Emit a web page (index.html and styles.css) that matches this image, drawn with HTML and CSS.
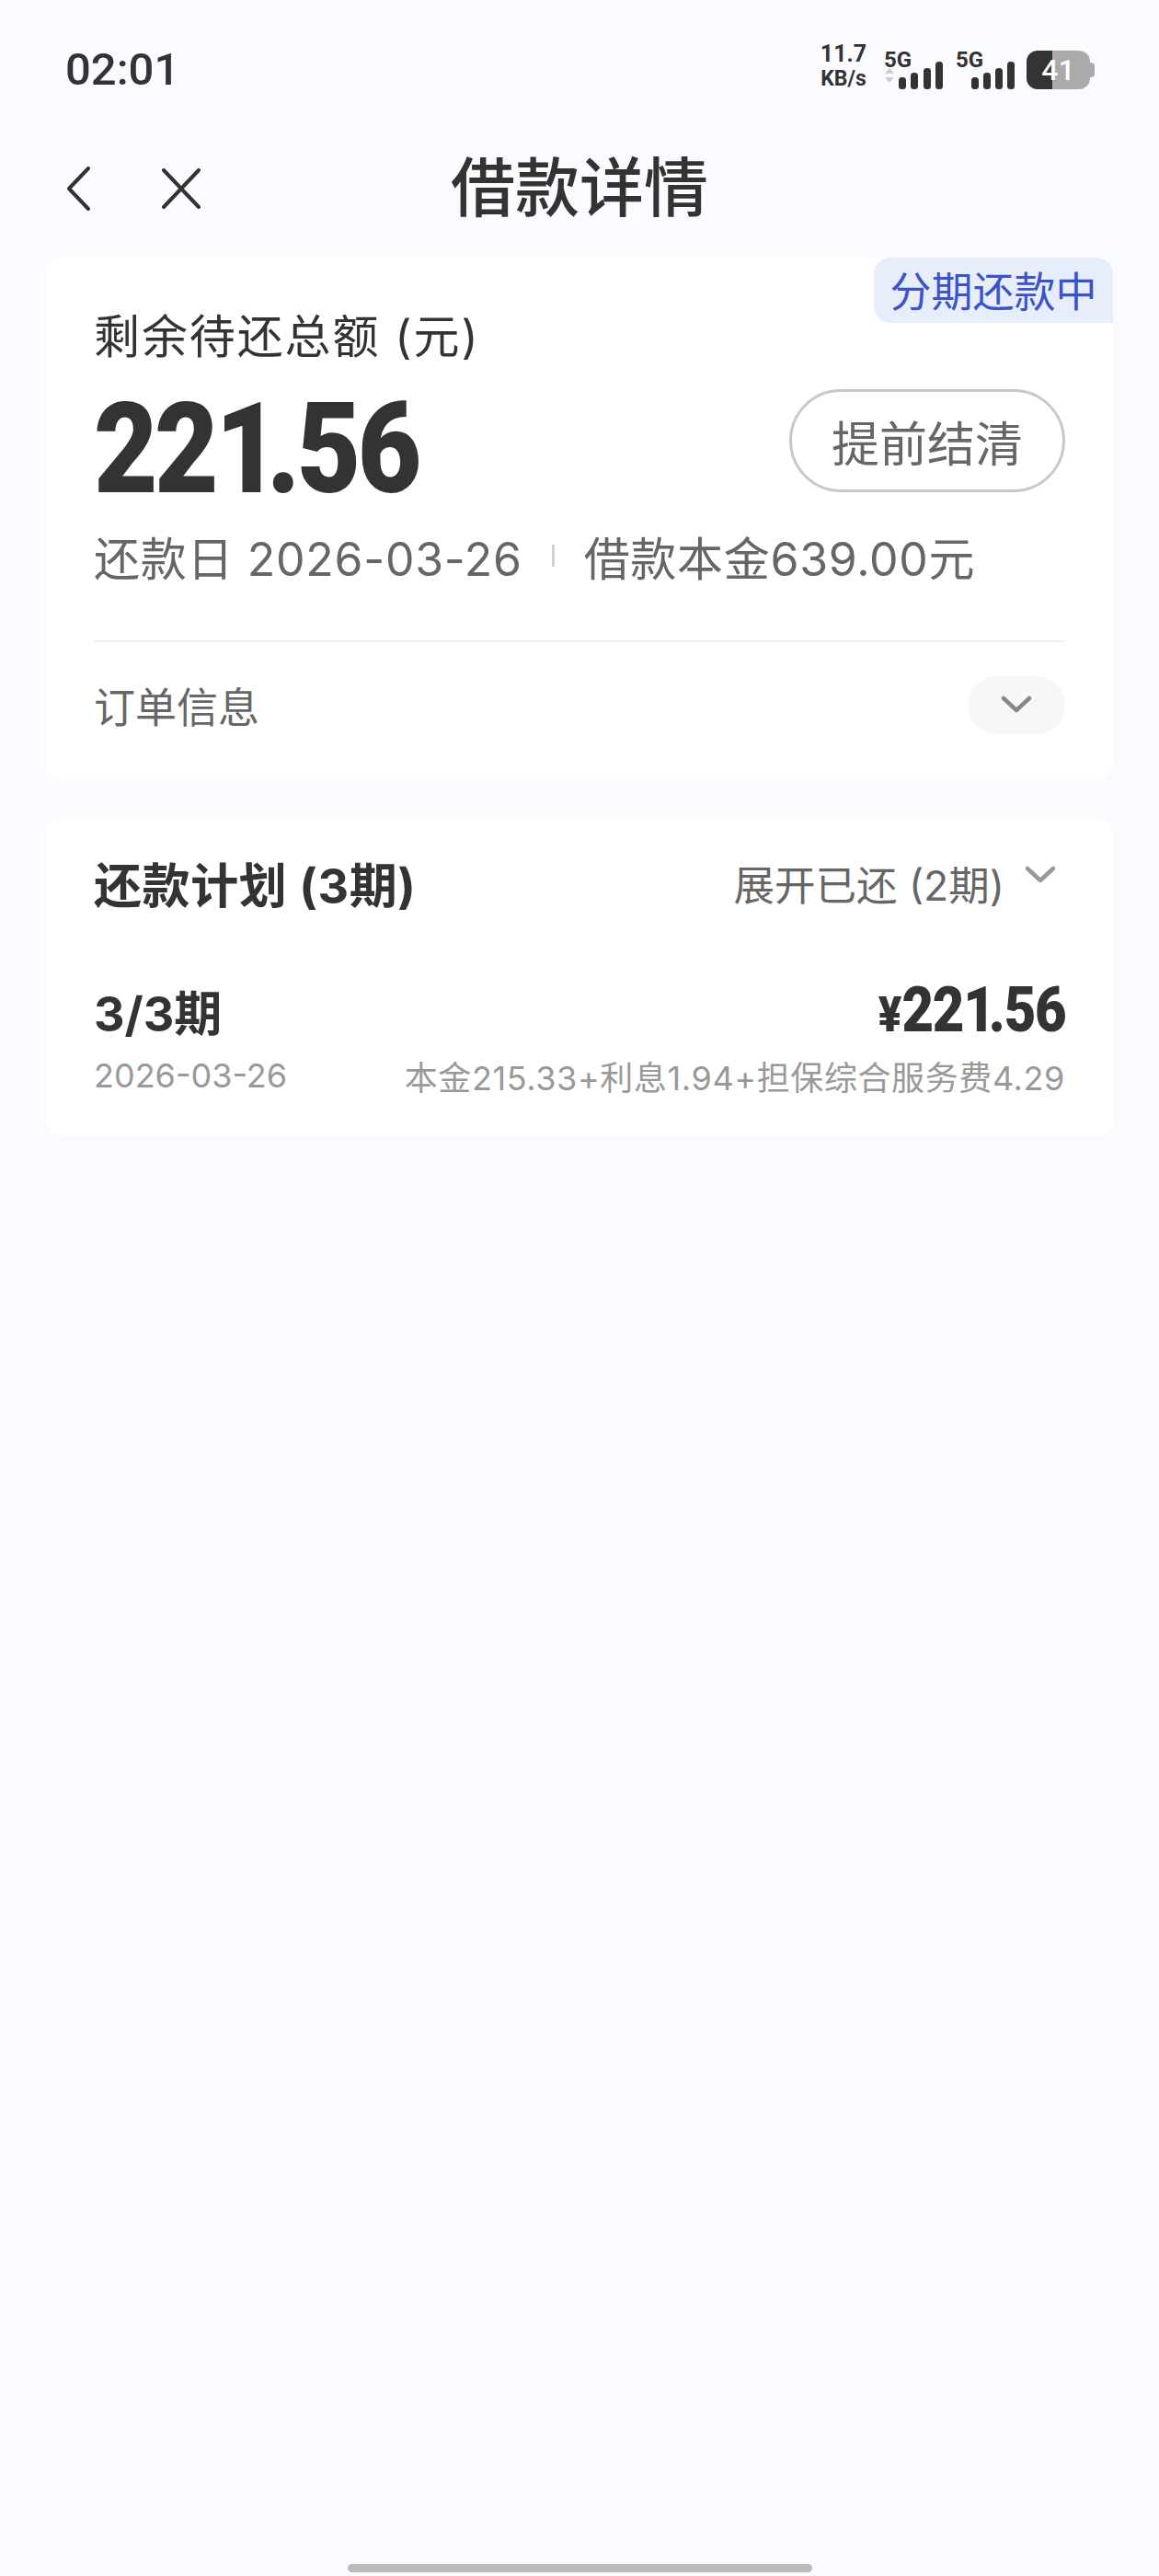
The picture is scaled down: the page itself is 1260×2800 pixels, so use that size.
FILE: index.html
```html
<!DOCTYPE html>
<html lang="zh-CN">

<head>
    <meta charset="UTF-8">
    <meta name="viewport" content="width=device-width, initial-scale=1.0">
    <title>借款详情</title>
    <link rel="stylesheet" href="styles.css">
</head>

<body>
    <div class="page">
        <div class="status-bar">
            <span class="time">02:01</span>
            <div class="status-icons">
                <div class="speed">
                    <span class="speed-num">11.7</span>
                    <span class="speed-unit">KB/s</span>
                </div>
                <div class="sim sim-first">
                    <span class="sim-label">5G</span>
                    <svg class="signal" width="64" height="30" viewBox="0 0 64 30">
                        <path d="M1 13 L6 7 L11 13 Z M1 17 L11 17 L6 23 Z" fill="#cccccc" />
                        <rect x="16" y="17" width="8" height="13" rx="3.5" fill="#333333" />
                        <rect x="29" y="12" width="8" height="18" rx="3.5" fill="#333333" />
                        <rect x="43" y="7" width="8" height="23" rx="3.5" fill="#333333" />
                        <rect x="56" y="0" width="8" height="30" rx="3.5" fill="#333333" />
                    </svg>
                </div>
                <div class="sim sim-second">
                    <span class="sim-label">5G</span>
                    <svg class="signal" width="47" height="30" viewBox="0 0 47 30">
                        <rect x="0" y="17" width="8" height="13" rx="3.5" fill="#333333" />
                        <rect x="13" y="12" width="8" height="18" rx="3.5" fill="#333333" />
                        <rect x="26" y="7" width="8" height="23" rx="3.5" fill="#333333" />
                        <rect x="39" y="0" width="8" height="30" rx="3.5" fill="#333333" />
                    </svg>
                </div>
                <div class="battery">
                    <span class="battery-level">41</span>
                </div>
                <div class="battery-nub"></div>
            </div>
        </div>

        <div class="nav-bar">
            <div class="nav-icons">
                <svg width="26" height="48" viewBox="0 0 26 48">
                    <path d="M24 2 L3 24 L24 46" fill="none" stroke="#333333" stroke-width="4" stroke-linecap="round" stroke-linejoin="round" />
                </svg>
                <svg width="44" height="44" viewBox="0 0 44 44">
                    <path d="M3 2 L41 42 M41 2 L3 42" fill="none" stroke="#333333" stroke-width="4" stroke-linecap="round" />
                </svg>
            </div>
            <h1 class="nav-title">借款详情</h1>
        </div>

        <div class="card summary">
            <div class="status-tag">分期还款中</div>
            <div class="summary-label">剩余待还总额 (元)</div>
            <div class="summary-main">
                <span class="amount">22<span class="one">1</span>.56</span>
                <button class="settle-btn">提前结清</button>
            </div>
            <div class="summary-sub">
                <span>还款日 2026-03-26</span>
                <span class="sub-sep"></span>
                <span>借款本金639.00元</span>
            </div>
            <div class="order-row">
                <span>订单信息</span>
                <span class="chevron-chip">
                    <svg width="34" height="20" viewBox="0 0 34 20">
                        <path d="M3 3 L17 16 L31 3" fill="none" stroke="#888888" stroke-width="4.5" stroke-linecap="round" stroke-linejoin="round" />
                    </svg>
                </span>
            </div>
        </div>

        <div class="card plan">
            <div class="plan-head">
                <span class="plan-title">还款计划 (3期)</span>
                <span class="plan-toggle">
                    展开已还 (2期)
                    <svg class="toggle-chevron" width="34" height="20" viewBox="0 0 34 20">
                        <path d="M3 3 L17 16 L31 3" fill="none" stroke="#999999" stroke-width="4.5" stroke-linecap="round" stroke-linejoin="round" />
                    </svg>
                </span>
            </div>
            <div class="plan-row">
                <span class="period">3/3期</span>
                <span class="row-amount"><span class="yen">¥</span>22<span class="one">1</span>.56</span>
            </div>
            <div class="plan-row plan-row-sub">
                <span>2026-03-26</span>
                <span class="fee-detail">本金215.33+利息1.94+担保综合服务费4.29</span>
            </div>
        </div>

        <div class="home-bar"></div>
    </div>
</body>

</html>
```

FILE: styles.css
```css
* {
    box-sizing: border-box;
}

body {
    margin: 0;
    background-color: #fafbff;
    color: #333333;
    font-family: 'Inter', 'Noto Sans CJK SC', sans-serif;
}

.page {
    display: flex;
    flex-direction: column;
    min-height: 2800px;
    padding: 0 50px;
}

/* status bar */
.status-bar {
    display: flex;
    justify-content: space-between;
    align-items: center;
    height: 150px;
    padding: 0 20px 0 21px;
    font-family: 'Roboto', sans-serif;
}

.time {
    font-size: 49px;
    font-weight: 500;
}

.status-icons {
    display: flex;
    align-items: flex-end;
    margin-bottom: 7px;
}

.speed {
    display: flex;
    flex-direction: column;
    align-items: center;
    width: 50px;
    margin-right: -2px;
    font-weight: 700;
    line-height: 1;
}

.speed-num {
    font-size: 25px;
    margin-bottom: 3px;
}

.speed-unit {
    font-size: 23px;
}

.sim {
    position: relative;
    display: flex;
    align-items: flex-end;
    height: 42px;
}

.sim-first {
    margin-left: 21px;
}

.sim-second {
    margin-left: 31px;
}

.sim-label {
    position: absolute;
    left: 0;
    top: -2px;
    font-size: 24px;
    font-weight: 700;
    line-height: 1;
}

.sim-second .sim-label {
    left: -17px;
}

.battery {
    display: flex;
    justify-content: center;
    align-items: center;
    width: 69px;
    height: 42px;
    margin-left: 13px;
    border-radius: 12px;
    background: linear-gradient(to right, #333333 41%, #aaaaaa 41%);
}

.battery-level {
    color: #ffffff;
    font-size: 32px;
    font-weight: 500;
}

.battery-nub {
    width: 5px;
    height: 16px;
    margin-bottom: 13px;
    border-radius: 0 4px 4px 0;
    background-color: #aaaaaa;
}

/* nav */
.nav-bar {
    position: relative;
    display: flex;
    justify-content: center;
    align-items: center;
    height: 110px;
    margin-bottom: 20px;
}

.nav-icons {
    position: absolute;
    left: 22px;
    top: 31px;
    display: flex;
    align-items: center;
    gap: 77px;
}

.nav-title {
    margin: 0;
    font-size: 70px;
    font-weight: 500;
    line-height: 1;
}

/* cards */
.card {
    background-color: #ffffff;
    border-radius: 18px;
    padding: 0 52px;
}

.summary {
    position: relative;
    height: 567px;
    margin-bottom: 42px;
}

.status-tag {
    position: absolute;
    right: 0;
    top: 0;
    width: 260px;
    height: 71px;
    border-radius: 18px 18px 0 18px;
    background-color: #e8edfb;
    color: #3a53c9;
    font-size: 45px;
    line-height: 76px;
    text-align: center;
}

.summary-label {
    padding-top: 56px;
    font-size: 50px;
    line-height: 60px;
    letter-spacing: 1.9px;
}

.summary-main {
    display: flex;
    justify-content: space-between;
    align-items: center;
    height: 120px;
    margin-top: 23px;
}

.amount {
    padding-top: 17px;
    font-family: 'Roboto', sans-serif;
    font-size: 138px;
    font-weight: 900;
    letter-spacing: -4px;
    line-height: 1;
    transform: scaleX(0.87);
    transform-origin: left center;
}

.amount .one {
    letter-spacing: -16px;
}

.settle-btn {
    width: 300px;
    height: 112px;
    border: 3px solid #c8c8c8;
    border-radius: 56px;
    background: none;
    color: #666666;
    font-family: inherit;
    font-size: 52px;
}

.summary-sub {
    display: flex;
    align-items: center;
    height: 64px;
    margin-top: 33px;
    color: #666666;
    font-size: 50px;
    letter-spacing: 0.7px;
}

.sub-sep {
    width: 3px;
    height: 24px;
    margin: 0 32px;
    background-color: #d0d0d0;
}

.order-row {
    display: flex;
    justify-content: space-between;
    align-items: center;
    height: 138px;
    margin-top: 60px;
    border-top: 2px solid #f2f2f2;
    color: #666666;
    font-size: 45px;
}

.chevron-chip {
    display: flex;
    justify-content: center;
    align-items: center;
    width: 106px;
    height: 63px;
    border-radius: 32px;
    background-color: #f7f7f7;
}

.plan {
    height: 346px;
}

.plan-head {
    display: flex;
    justify-content: space-between;
    align-items: center;
    height: 140px;
    margin-bottom: 24px;
}

.plan-title {
    font-size: 52px;
    font-weight: 700;
    letter-spacing: 0.6px;
}

.plan-toggle {
    display: flex;
    align-items: center;
    gap: 22px;
    color: #666666;
    font-size: 44.5px;
}

.toggle-chevron {
    margin-right: 10px;
    margin-bottom: 16px;
}

.plan-row {
    display: flex;
    justify-content: space-between;
    align-items: center;
    height: 90px;
}

.period {
    font-size: 52px;
    font-weight: 700;
}

.row-amount {
    font-family: 'Roboto', sans-serif;
    font-size: 68px;
    font-weight: 900;
    letter-spacing: -1.5px;
    transform: scaleX(0.88);
    transform-origin: right center;
}

.row-amount .one {
    letter-spacing: -8px;
}

.yen {
    font-size: 54px;
    letter-spacing: 0;
}

.plan-row-sub {
    height: 52px;
    color: #999999;
    font-size: 36px;
}

.fee-detail {
    letter-spacing: 0.6px;
}

.home-bar {
    align-self: center;
    width: 505px;
    height: 9px;
    margin-top: auto;
    margin-bottom: 4px;
    border-radius: 5px;
    background-color: #bbbbbb;
}
```
